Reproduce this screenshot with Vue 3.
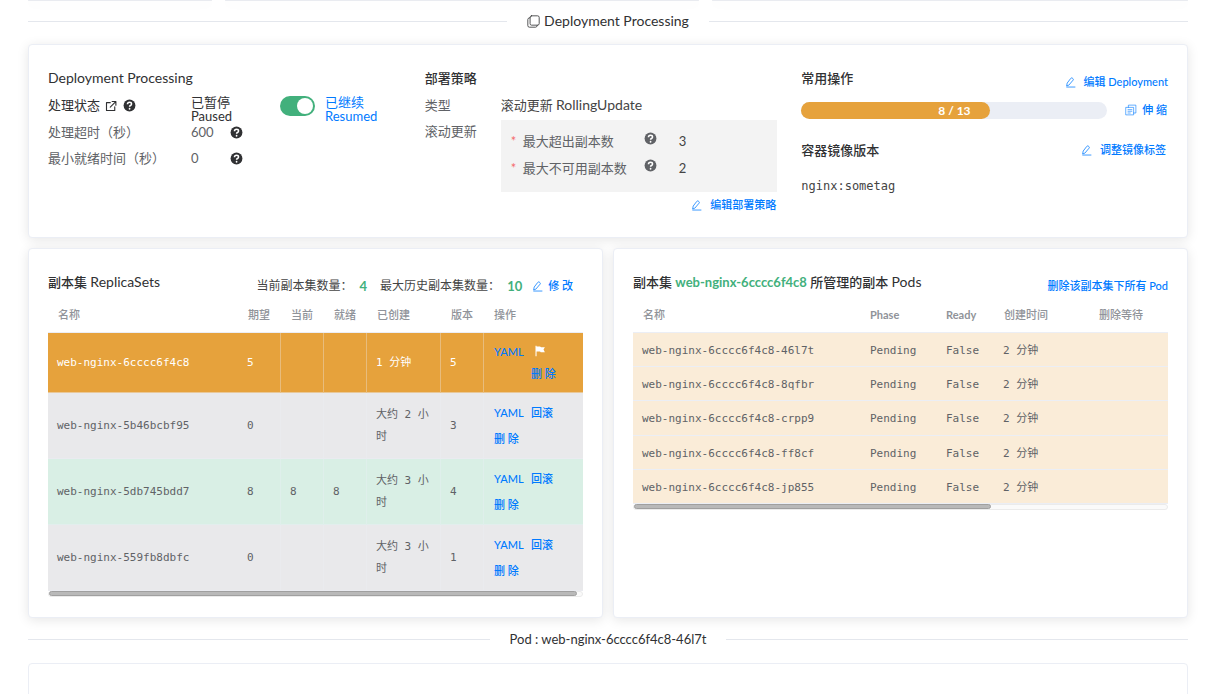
<script setup>
import { ref, h } from 'vue'

const paused = ref(true)

const svg = (size, kids) => h('svg', { viewBox: '0 0 16 16', width: size, height: size, class: 'ico', 'aria-hidden': 'true' }, kids)
const line = (d, w = 1) => h('path', { d, fill: 'none', stroke: 'currentColor', 'stroke-width': w, 'stroke-linecap': 'round', 'stroke-linejoin': 'round' })

const EditIcon = () => svg(11, [line('M2.5 12.5 L3.2 8.8 L8.4 2 Q9.4 .8 10.6 1.6 L11.6 2.4 Q12.7 3.3 11.8 4.5 L6 11.4 Z M2.5 14.6 H14.5', 1.1)])
const HelpIcon = () => svg(13, [
  h('circle', { cx: 8, cy: 8, r: 7.3, fill: 'currentColor' }),
  h('path', { d: 'M5.5 6.4 Q5.6 4 8 4 Q10.5 4 10.5 6.1 Q10.5 7.3 9.2 8 Q8.1 8.6 8.1 9.6', fill: 'none', stroke: '#fff', 'stroke-width': 1.9 }),
  h('circle', { cx: 8.1, cy: 12, r: 1.1, fill: '#fff' })
])
const CopyIcon = () => svg(13, [line('M5.5 1 H13 Q15 1 15 3 V10.5 Q15 12.5 13 12.5 H5.5 Q3.8 12.5 3.8 10.5 V3 Q3.8 1 5.5 1 Z M3.8 3.2 Q1 3.4 1 5.5 V13 Q1 15 3 15 H10.5 Q12.5 15 12.8 12.6')])
const DocsIcon = () => svg(12, [line('M1.5 4.5 H11.5 V14.5 H1.5 Z M4.5 4.5 V1.5 H14.5 V12 H11.5 M4 7.5 H9.2 M4 9.7 H9.2 M4 12 H7', 0.8)])
const LinkIcon = () => svg(12, [line('M7 3.5 H2 V14 H13 V9 M9.5 2 H14.5 V7 M14 2.5 L7 9.5', 1.5)])
const FlagIcon = () => svg(12, [h('path', { d: 'M2 1 H3.4 V2 H8 L9.5 3 H14.5 L12.7 6 L14.5 9.5 H9 L8 8.5 H3.4 V15 H2 Z', fill: 'currentColor' })])

const limits = [
  { name: '最大超出副本数', value: 3 },
  { name: '最大不可用副本数', value: 2 }
]
const replicaSets = [
  { name: 'web-nginx-6cccc6f4c8', want: 5, created: '1 分钟', rev: 5, kind: 'current' },
  { name: 'web-nginx-5b46bcbf95', want: 0, created: '大约 2 小时', rev: 3, kind: 'idle' },
  { name: 'web-nginx-5db745bdd7', want: 8, now: 8, ready: 8, created: '大约 3 小时', rev: 4, kind: 'live' },
  { name: 'web-nginx-559fb8dbfc', want: 0, created: '大约 3 小时', rev: 1, kind: 'idle' }
]
const pods = ['46l7t', '8qfbr', 'crpp9', 'ff8cf', 'jp855']
const scale = { current: 8, target: 13 }
</script>

<template>
  <main class="page">
    <div class="previous"><div class="card"></div><div class="card"></div><div class="card"></div></div>

    <h2 class="divider"><span><CopyIcon /> Deployment Processing</span></h2>

    <section class="card overview">
      <div>
        <h3 class="en">Deployment Processing</h3>
        <div class="status">
          <label for="pause">处理状态 <a href="#" aria-label="文档"><LinkIcon /></a> <HelpIcon /></label>
          <span class="state">已暂停<br>Paused</span>
          <input id="pause" v-model="paused" type="checkbox" role="switch" class="switch">
          <span class="state on">已继续<br>Resumed</span>
        </div>
        <dl class="fields">
          <dt>处理超时（秒）</dt><dd>600</dd><dd class="dark"><HelpIcon /></dd>
          <dt>最小就绪时间（秒）</dt><dd>0</dd><dd class="dark"><HelpIcon /></dd>
        </dl>
      </div>

      <div>
        <h3 class="bold">部署策略</h3>
        <dl class="strategy">
          <dt>类型</dt>
          <dd>滚动更新 <span class="en">RollingUpdate</span></dd>
          <dt>滚动更新</dt>
          <dd class="box">
            <div v-for="l in limits" :key="l.name" class="limit">
              <span class="req">*</span>
              <span class="limit-name">{{ l.name }} <HelpIcon /></span>
              <span class="val">{{ l.value }}</span>
            </div>
          </dd>
        </dl>
        <div class="right"><button class="link"><EditIcon /> 编辑部署策略</button></div>
      </div>

      <div>
        <div class="head">
          <h3 class="bold">常用操作</h3>
          <button class="link low"><EditIcon /> 编辑 Deployment</button>
        </div>
        <div class="scale">
          <div class="track">
            <div class="bar" :style="{ width: (scale.current / scale.target * 100) + '%' }">{{ scale.current }} / {{ scale.target }}</div>
          </div>
          <button class="link tight"><DocsIcon /> 伸 缩</button>
        </div>
        <div class="head image">
          <h3 class="bold">容器镜像版本</h3>
          <button class="link"><EditIcon /> 调整镜像标签</button>
        </div>
        <code>nginx:sometag</code>
      </div>
    </section>

    <div class="pair">
      <section class="card">
        <div class="head title">
          <h3><span class="bold">副本集</span> <span class="en">ReplicaSets</span></h3>
          <p class="counts">
            <span>当前副本集数量：</span><b>4</b>
            <span class="next">最大历史副本集数量：</span><b>10</b>
            <button class="link"><EditIcon /> 修 改</button>
          </p>
        </div>
        <table class="sets">
          <colgroup><col class="w-name"><col class="w-n"><col class="w-n"><col class="w-n"><col class="w-time"><col class="w-n"><col></colgroup>
          <thead><tr><th>名称</th><th>期望</th><th>当前</th><th>就绪</th><th>已创建</th><th>版本</th><th>操作</th></tr></thead>
          <tbody>
            <tr v-for="r in replicaSets" :key="r.name" :class="r.kind">
              <td>{{ r.name }}</td><td>{{ r.want }}</td><td>{{ r.now }}</td><td>{{ r.ready }}</td>
              <td>{{ r.created }}</td><td>{{ r.rev }}</td>
              <td>
                <div class="ops">
                  <button class="link">YAML</button>
                  <span v-if="r.kind === 'current'" class="flag"><FlagIcon /></span>
                  <button v-else class="link">回滚</button>
                  <button class="link del">删 除</button>
                </div>
              </td>
            </tr>
          </tbody>
        </table>
        <div class="scroll"><div class="thumb wide"></div></div>
      </section>

      <section class="card">
        <div class="head title">
          <h3><span class="bold">副本集</span> <b class="green">web-nginx-6cccc6f4c8</b> <span class="bold">所管理的副本</span> <span class="en">Pods</span></h3>
          <button class="link low">删除该副本集下所有 Pod</button>
        </div>
        <table class="pods">
          <colgroup><col class="p-name"><col class="p-phase"><col class="p-ready"><col class="p-time"><col></colgroup>
          <thead><tr><th>名称</th><th>Phase</th><th>Ready</th><th>创建时间</th><th>删除等待</th></tr></thead>
          <tbody>
            <tr v-for="p in pods" :key="p">
              <td>web-nginx-6cccc6f4c8-{{ p }}</td><td>Pending</td><td>False</td><td>2 分钟</td><td></td>
            </tr>
          </tbody>
        </table>
        <div class="scroll"><div class="thumb"></div></div>
      </section>
    </div>

    <h2 class="divider second"><span>Pod : web-nginx-6cccc6f4c8-46l7t</span></h2>

    <section class="card detail"></section>
  </main>
</template>

<style>
body { background: #fff; }
</style>

<style scoped>
* { box-sizing: border-box; }
.page {
  height: 100vh; overflow: hidden; padding: 0 28px;
  font: 13px/20px Lato, "Noto Sans CJK SC", sans-serif; color: #303133;
}
h2, h3, p, dl, dd { margin: 0; font-weight: 400; }
h3 { font-size: 13px; line-height: 20px; }
.card { background: #fff; border: 1px solid #ebeef5; border-radius: 4px; box-shadow: 0 2px 12px rgba(0, 0, 0, .1); padding: 23px 19px 20px; min-width: 0; }
.previous { display: grid; grid-template-columns: 184fr 474fr 476fr; gap: 13px; }
.previous .card { height: 1px; padding: 0; border: 0; background: #e9ebf0; }
.divider { display: flex; align-items: center; gap: 20px; font-size: 14px; line-height: 20px; margin: 10px 0 13px; }
.divider::before, .divider::after { content: ""; flex: 1; height: 1px; background: #e4e7ed; }
.divider span { display: flex; align-items: center; gap: 4px; }
.second { margin: 11px 0 14px; font-size: 13px; }
.en { font-size: 14px; }
.ico { flex: none; vertical-align: -2px; }
button { font: inherit; border: 0; background: none; padding: 0; cursor: pointer; }
.link { color: #007aff; font-size: 11px; font-weight: 500; line-height: 20px; display: inline-flex; align-items: center; gap: 8px; white-space: nowrap; }
.tight, .counts .link { gap: 5px; }

.overview { display: grid; grid-template-columns: 352fr 352fr 366fr; gap: 24px; height: 194px; }
.bold { font-weight: 500; }
.status { display: grid; grid-template-columns: 143px 89px 45px 1fr; align-items: center; height: 36px; }
.status .ico { margin-left: 2px; }
.status a { color: inherit; }
.state { line-height: 14px; padding-top: 5px; }
.status label { margin-top: -2px; }
.on { color: #007aff; }
.switch { appearance: none; width: 35px; height: 20px; margin: 0; border-radius: 10px; background: #42b07c; padding: 2px; display: flex; justify-content: flex-start; }
.switch:checked { justify-content: flex-end; }
.switch::after { content: ""; width: 16px; height: 16px; border-radius: 50%; background: #fff; }
.fields { display: grid; grid-template-columns: 143px 39px 1fr; grid-auto-rows: 26px; line-height: 26px; margin-top: -5px; color: #606266; }
.dark { color: #303133; }
.strategy { display: grid; grid-template-columns: 76px 1fr; line-height: 26px; margin-top: 4px; color: #606266; }
.strategy > dd { color: #444; }
.box { background: #f3f3f3; height: 72px; padding: 8px 10px; margin-top: 2px; }
.limit { display: grid; grid-template-columns: 12px 156px 1fr; height: 27px; color: #606266; }
.limit-name { display: flex; justify-content: space-between; padding-right: 22px; }
.limit .ico { margin-top: 4px; }
.req { color: #f56c6c; }
.val { color: #444; }
.right { text-align: right; margin-top: 3px; padding-right: 1px; }
.head { display: flex; justify-content: space-between; align-items: flex-start; }
.low { padding-top: 4px; }
.scale { display: flex; align-items: center; justify-content: space-between; gap: 18px; margin-top: 8px; padding-right: 1px; }
.track { flex: 1; height: 17px; border-radius: 9px; background: #ebeef5; }
.bar { height: 17px; border-radius: 9px; background: #e6a23c; color: #fff; font-size: 12px; line-height: 17px; font-weight: 700; text-align: right; padding-right: 19px; }
.image { margin: 20px 0 16px; padding-right: 2px; align-items: center; }
code { display: block; font: 12px/20px "DejaVu Sans Mono", monospace; color: #444; }

.pair { display: grid; grid-template-columns: 1fr 1fr; gap: 10px; margin-top: 10px; }
.pair .card { height: 370px; }
.title { height: 32px; }
.counts { display: flex; align-items: center; gap: 7px; font-size: 12px; padding: 4px 10px 0 0; color: #444; }
.counts b, .green { color: #42b07c; font-weight: 700; }
.counts b { font-size: 13px; }
.counts .next { margin-left: 6px; }
.counts .link { margin-left: 3px; }
table { width: 100%; border-collapse: separate; border-spacing: 0; table-layout: fixed; font: 11px/22px "DejaVu Sans Mono", "Noto Sans CJK SC", monospace; color: #606266; }
th { font: 500 11px/22px Lato, "Noto Sans CJK SC", sans-serif; color: #909399; text-align: left; vertical-align: top; padding: 0 10px; height: 29px; }
th, td { border-bottom: 1px solid #ebeef5; }
td { padding: 1px 9px 0; }
.w-name { width: 190px; }
.w-n { width: 43px; }
.w-time { width: 74px; }
.sets td { height: 66px; border-bottom-color: rgba(235, 238, 245, .5); border-right: 1px solid rgba(235, 238, 245, .35); }
.sets td:first-child, .sets td:last-child { border-right: 0; }
.sets td:last-child { padding: 0 10px; }
.sets .current td { height: 60px; }
.current { background: #e6a23c; color: #fff; }
.idle { background: #e9e9eb; }
.live { background: #d9efe5; }
.ops { display: grid; grid-template-columns: 37px 1fr; line-height: 26px; }
.ops .link { line-height: 26px; font-family: Lato, "Noto Sans CJK SC", sans-serif; }
.current .ops { line-height: 22px; }
.current .ops .link { line-height: 22px; }
.current .del { grid-column: 2; }
.flag { padding-left: 3px; }
.p-name { width: 228px; }
.p-phase { width: 76px; }
.p-ready { width: 57px; }
.p-time { width: 95px; }
.pods td { height: 34px; background: #faecd8; padding-top: 2px; }
.pods th:nth-child(2), .pods th:nth-child(3) { padding: 0 9px; font-weight: 700; }
.pods tr:nth-child(3) td { height: 35px; }
.scroll { height: 6px; border: 1px solid #ebebeb; border-radius: 3px; background: #fafafa; }
.thumb { width: 67%; height: 5px; margin-top: -1px; border: 1px solid #a0a0a0; border-radius: 3px; background: #b9b9b9; }
.wide { width: 99%; }
.detail { height: 120px; box-shadow: none; }
</style>
